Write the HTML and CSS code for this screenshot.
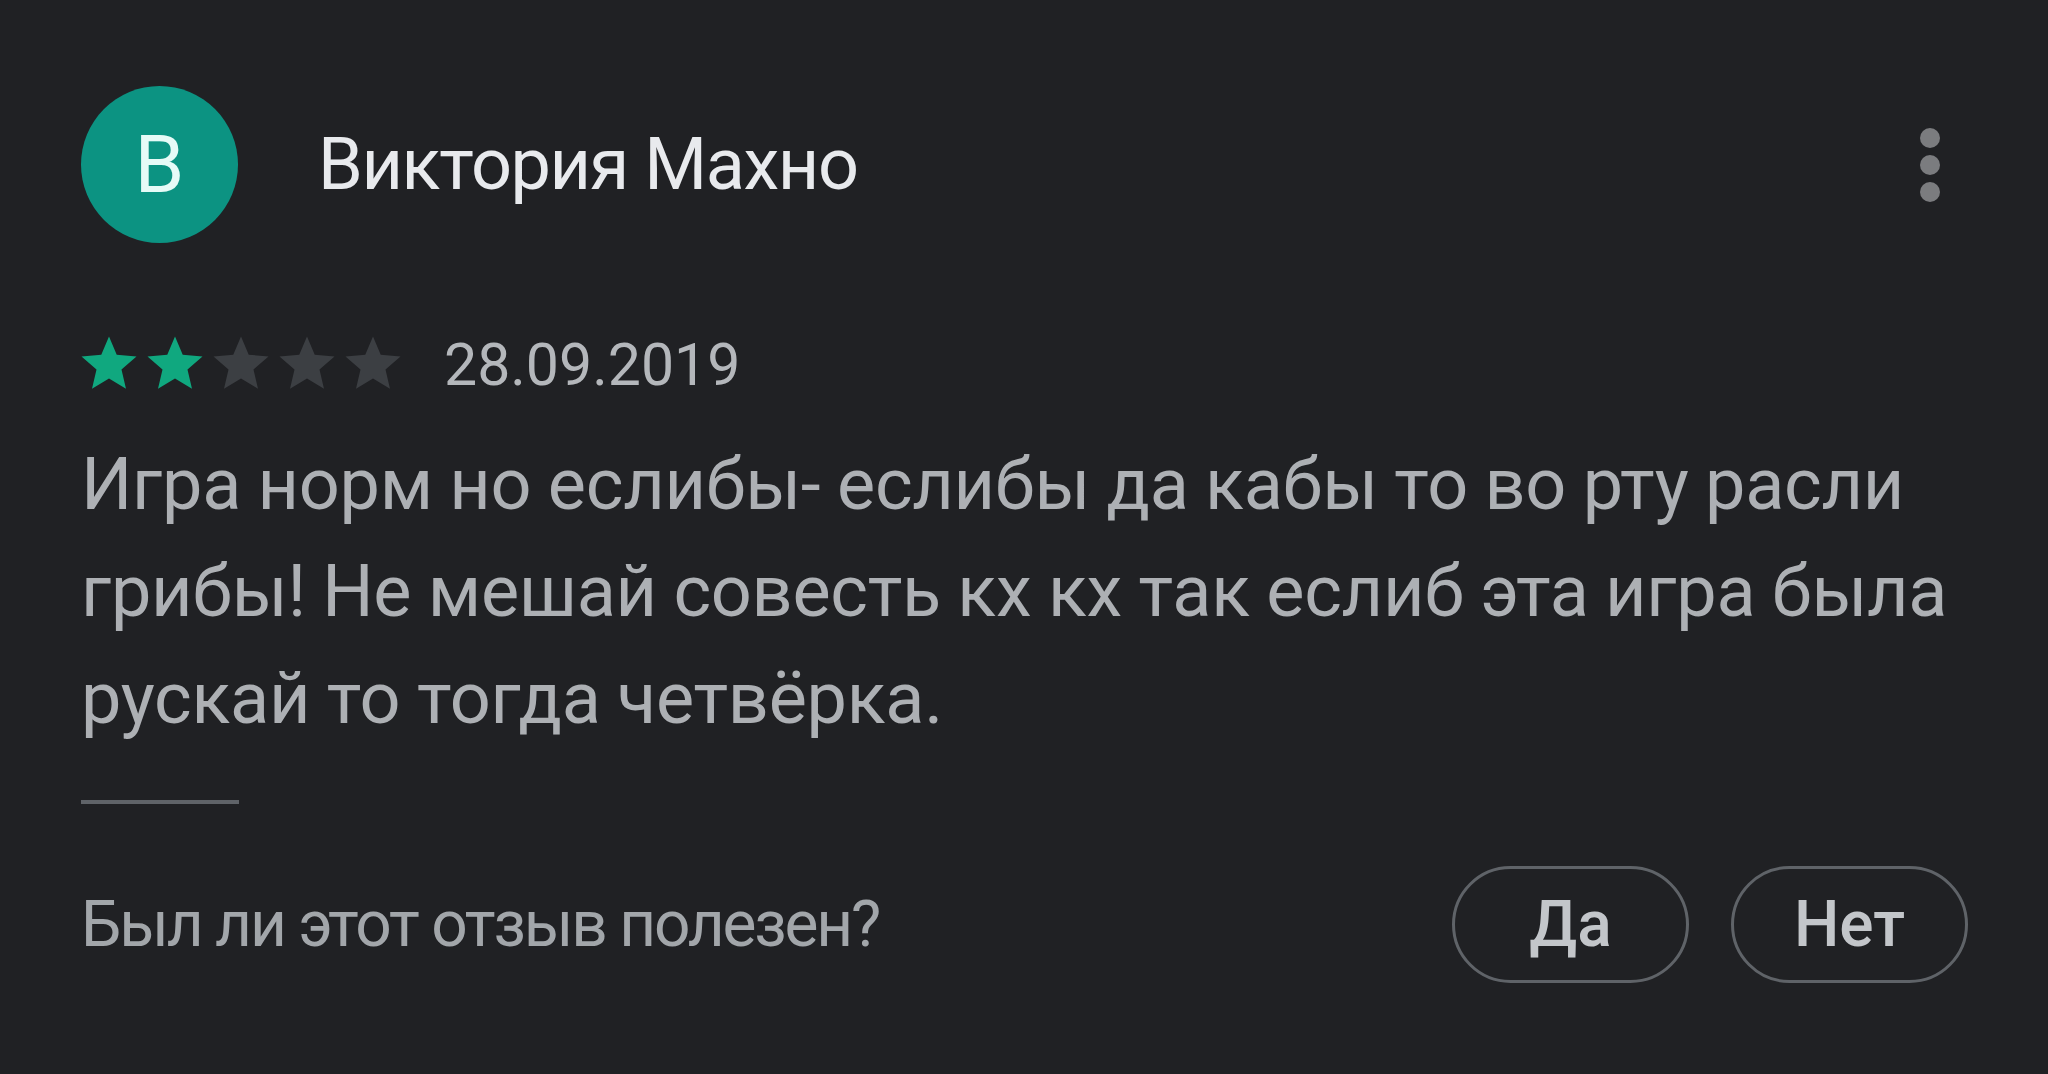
FILE: index.html
```html
<!DOCTYPE html>
<html lang="ru">
<head>
<meta charset="utf-8">
<title>Отзыв</title>
<link rel="stylesheet" href="styles.css">
</head>
<body>
<div class="review">
  <div class="header">
    <div class="avatar">В</div>
    <div class="name">Виктория Махно</div>
    <div class="more" aria-label="Ещё">
      <span class="dot"></span><span class="dot"></span><span class="dot"></span>
    </div>
  </div>
  <div class="meta">
    <div class="stars">
      <svg class="star on" viewBox="0 0 24 24"><path d="M12 17.27L18.18 21l-1.64-7.03L22 9.24l-7.19-.61L12 2 9.19 8.63 2 9.24l5.46 4.73L5.82 21z"/></svg>
      <svg class="star on" viewBox="0 0 24 24"><path d="M12 17.27L18.18 21l-1.64-7.03L22 9.24l-7.19-.61L12 2 9.19 8.63 2 9.24l5.46 4.73L5.82 21z"/></svg>
      <svg class="star" viewBox="0 0 24 24"><path d="M12 17.27L18.18 21l-1.64-7.03L22 9.24l-7.19-.61L12 2 9.19 8.63 2 9.24l5.46 4.73L5.82 21z"/></svg>
      <svg class="star" viewBox="0 0 24 24"><path d="M12 17.27L18.18 21l-1.64-7.03L22 9.24l-7.19-.61L12 2 9.19 8.63 2 9.24l5.46 4.73L5.82 21z"/></svg>
      <svg class="star" viewBox="0 0 24 24"><path d="M12 17.27L18.18 21l-1.64-7.03L22 9.24l-7.19-.61L12 2 9.19 8.63 2 9.24l5.46 4.73L5.82 21z"/></svg>
    </div>
    <div class="date">28.09.2019</div>
  </div>
  <p class="text">Игра норм но еслибы- еслибы да кабы то во рту расли грибы! Не мешай совесть кх кх так еслиб эта игра была рускай то тогда четвёрка.</p>
  <div class="divider"></div>
  <div class="footer">
    <div class="question">Был ли этот отзыв полезен?</div>
    <div class="actions">
      <button class="pill">Да</button>
      <button class="pill">Нет</button>
    </div>
  </div>
</div>
</body>
</html>
```
FILE: styles.css
```css
html, body {
  margin: 0;
  padding: 0;
  background: #202124;
}
body {
  width: 2048px;
  height: 1074px;
  overflow: hidden;
  font-family: Roboto, "Noto Sans", sans-serif;
}
.review {
  padding: 86px 80px 0 81px;
}
.header {
  display: flex;
  align-items: center;
  height: 157px;
}
.avatar {
  width: 157px;
  height: 157px;
  border-radius: 50%;
  background: #0c9382;
  color: #e6fbf7;
  font-size: 80px;
  display: flex;
  align-items: center;
  justify-content: center;
  flex: none;
}
.name {
  margin-left: 80px;
  font-size: 72px;
  letter-spacing: -1.4px;
  color: #e8eaed;
}
.more {
  margin-left: auto;
  margin-right: 28px;
  display: flex;
  flex-direction: column;
  align-items: center;
  gap: 7px;
}
.dot {
  width: 20px;
  height: 20px;
  border-radius: 50%;
  background: #7b7c7f;
}
.meta {
  display: flex;
  align-items: center;
  margin-top: 88px;
  height: 66px;
}
.stars {
  display: flex;
  margin-left: -5px;
}
.star {
  width: 66px;
  height: 66px;
  fill: #3c3f43;
}
.star.on {
  fill: #10a87f;
}
.date {
  margin-left: 38px;
  font-size: 59px;
  color: #b4b7bb;
}
.text {
  margin: 34px 0 0;
  width: 1925px;
  font-size: 72px;
  line-height: 107px;
  letter-spacing: -0.3px;
  word-spacing: -1px;
  color: #adb0b4;
}
.divider {
  margin-top: 48px;
  width: 158px;
  height: 4px;
  background: #5f6368;
}
.footer {
  display: flex;
  align-items: center;
  justify-content: space-between;
  margin-top: 62px;
}
.question {
  font-size: 64px;
  letter-spacing: -2.2px;
  color: #a2a6aa;
}
.actions {
  display: flex;
  gap: 42px;
}
.pill {
  width: 237px;
  height: 117px;
  border: 3px solid #5f6368;
  border-radius: 60px;
  background: transparent;
  color: #c3c6ca;
  font-family: Roboto, "Noto Sans", sans-serif;
  font-size: 64px;
  font-weight: 500;
  padding: 0;
}
```
